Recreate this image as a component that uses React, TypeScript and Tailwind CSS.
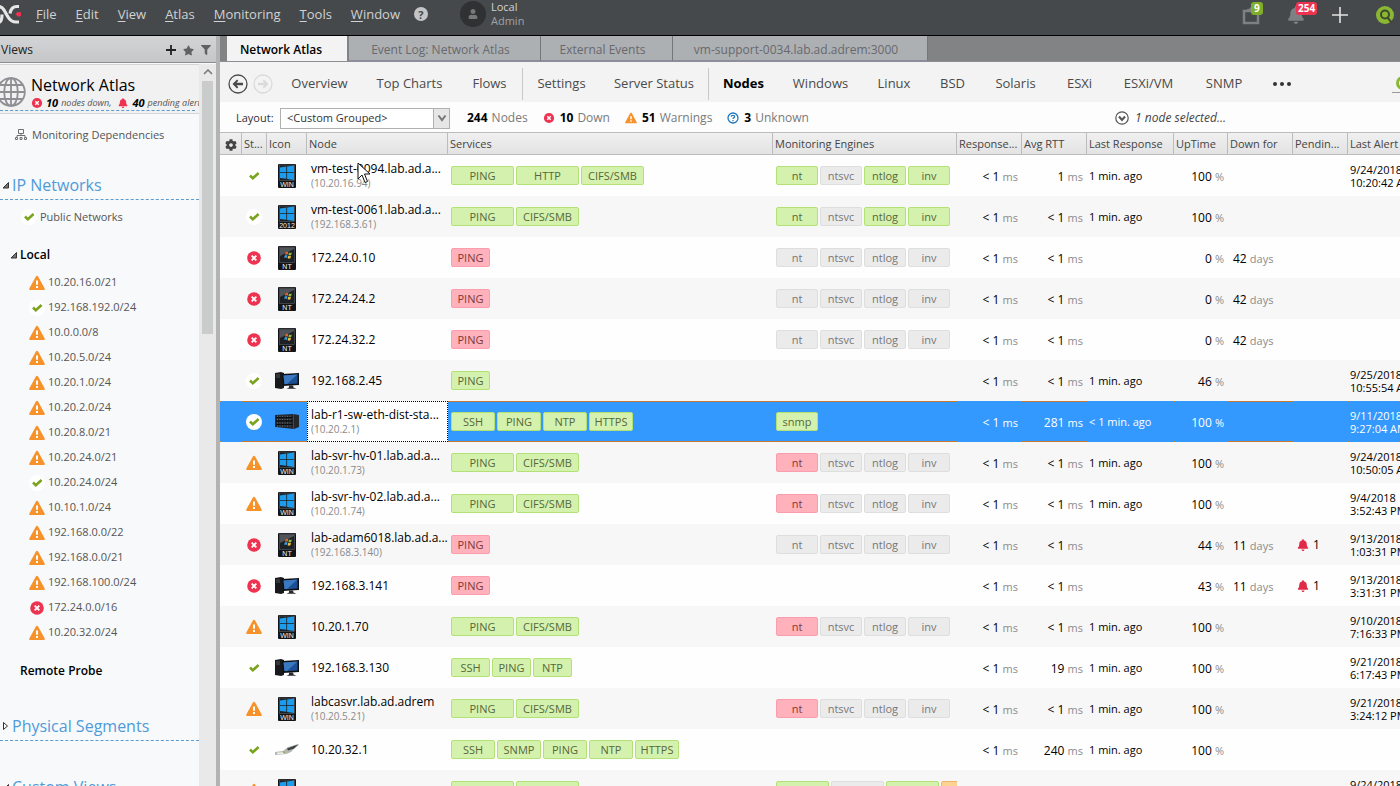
import { useState } from "react";
import type { ReactNode } from "react";
import { FaBell, FaFilter, FaStar, FaCog, FaUser } from "react-icons/fa";
import clsx from "clsx";

// ── Types and data ──────────────────────────────────────────────

type Status = "ok" | "down" | "warn";
type Device = "win" | "w2012" | "nt" | "pc" | "switch" | "cable";
type Tone = "green" | "red" | "gray" | "orange";

interface Tag {
  label: string;
  tone: Tone;
}

interface NodeRow {
  status: Status;
  device: Device;
  name: string;
  ip?: string;
  services: string[];
  engines?: Tag[];
  rtt: string;
  seen?: string;
  uptime: string;
  down?: string;
  pending?: string;
  alert?: [string, string];
}

const engines = (nt: Tone, rest: Tone): Tag[] => [
  { label: "nt", tone: nt },
  { label: "ntsvc", tone: "gray" },
  { label: "ntlog", tone: rest },
  { label: "inv", tone: rest },
];

const rows: NodeRow[] = [
  { status: "ok", device: "win", name: "vm-test-0094.lab.ad.a...", ip: "10.20.16.94", services: ["PING", "HTTP", "CIFS/SMB"], engines: engines("green", "green"), rtt: "1", seen: "1 min. ago", uptime: "100", alert: ["9/24/2018", "10:20:42 AM"] },
  { status: "ok", device: "w2012", name: "vm-test-0061.lab.ad.a...", ip: "192.168.3.61", services: ["PING", "CIFS/SMB"], engines: engines("green", "green"), rtt: "< 1", seen: "1 min. ago", uptime: "100" },
  { status: "down", device: "nt", name: "172.24.0.10", services: ["PING"], engines: engines("gray", "gray"), rtt: "< 1", uptime: "0", down: "42" },
  { status: "down", device: "nt", name: "172.24.24.2", services: ["PING"], engines: engines("gray", "gray"), rtt: "< 1", uptime: "0", down: "42" },
  { status: "down", device: "nt", name: "172.24.32.2", services: ["PING"], engines: engines("gray", "gray"), rtt: "< 1", uptime: "0", down: "42" },
  { status: "ok", device: "pc", name: "192.168.2.45", services: ["PING"], rtt: "< 1", seen: "1 min. ago", uptime: "46", alert: ["9/25/2018", "10:55:54 AM"] },
  { status: "ok", device: "switch", name: "lab-r1-sw-eth-dist-sta...", ip: "10.20.2.1", services: ["SSH", "PING", "NTP", "HTTPS"], engines: [{ label: "snmp", tone: "green" }], rtt: "281", seen: "< 1 min. ago", uptime: "100", alert: ["9/11/2018", "9:27:04 AM"] },
  { status: "warn", device: "win", name: "lab-svr-hv-01.lab.ad.a...", ip: "10.20.1.73", services: ["PING", "CIFS/SMB"], engines: engines("red", "gray"), rtt: "< 1", seen: "1 min. ago", uptime: "100", alert: ["9/24/2018", "10:50:05 AM"] },
  { status: "warn", device: "win", name: "lab-svr-hv-02.lab.ad.a...", ip: "10.20.1.74", services: ["PING", "CIFS/SMB"], engines: engines("red", "gray"), rtt: "< 1", seen: "1 min. ago", uptime: "100", alert: ["9/4/2018", "3:52:43 PM"] },
  { status: "down", device: "nt", name: "lab-adam6018.lab.ad.a...", ip: "192.168.3.140", services: ["PING"], engines: engines("gray", "gray"), rtt: "< 1", uptime: "44", down: "11", pending: "1", alert: ["9/13/2018", "1:03:31 PM"] },
  { status: "down", device: "pc", name: "192.168.3.141", services: ["PING"], rtt: "< 1", uptime: "43", down: "11", pending: "1", alert: ["9/13/2018", "3:31:31 PM"] },
  { status: "warn", device: "win", name: "10.20.1.70", services: ["PING", "CIFS/SMB"], engines: engines("red", "gray"), rtt: "< 1", seen: "1 min. ago", uptime: "100", alert: ["9/10/2018", "7:16:33 PM"] },
  { status: "ok", device: "pc", name: "192.168.3.130", services: ["SSH", "PING", "NTP"], rtt: "19", seen: "1 min. ago", uptime: "100", alert: ["9/21/2018", "6:17:43 PM"] },
  { status: "warn", device: "win", name: "labcasvr.lab.ad.adrem", ip: "10.20.5.21", services: ["PING", "CIFS/SMB"], engines: engines("red", "gray"), rtt: "< 1", seen: "1 min. ago", uptime: "100", alert: ["9/21/2018", "3:24:12 PM"] },
  { status: "ok", device: "cable", name: "10.20.32.1", services: ["SSH", "SNMP", "PING", "NTP", "HTTPS"], rtt: "240", seen: "1 min. ago", uptime: "100" },
  { status: "warn", device: "win", name: "10.20.1.71", services: ["PING", "CIFS/SMB"], engines: [{ label: "nt", tone: "green" }, { label: "ntsvc", tone: "gray" }, { label: "ntlog", tone: "green" }, { label: "inv", tone: "orange" }], rtt: "< 1", seen: "1 min. ago", uptime: "100", alert: ["9/24/2018", "10:12:08 AM"] },
];

const columns = [
  { label: "St...", width: "w-[25px]" },
  { label: "Icon", width: "w-10" },
  { label: "Node", width: "w-[141px]" },
  { label: "Services", width: "" },
  { label: "Monitoring Engines", width: "w-[184px]" },
  { label: "Response...", width: "w-[65px]" },
  { label: "Avg RTT", width: "w-[65px]" },
  { label: "Last Response", width: "w-[87px]" },
  { label: "UpTime", width: "w-[54px]" },
  { label: "Down for", width: "w-[65px]" },
  { label: "Pendin...", width: "w-[55px]" },
  { label: "Last Alert", width: "w-[92px]" },
];

const subnets: { status: Status; label: string }[] = [
  { status: "warn", label: "10.20.16.0/21" },
  { status: "ok", label: "192.168.192.0/24" },
  { status: "warn", label: "10.0.0.0/8" },
  { status: "warn", label: "10.20.5.0/24" },
  { status: "warn", label: "10.20.1.0/24" },
  { status: "warn", label: "10.20.2.0/24" },
  { status: "warn", label: "10.20.8.0/21" },
  { status: "warn", label: "10.20.24.0/21" },
  { status: "ok", label: "10.20.24.0/24" },
  { status: "warn", label: "10.10.1.0/24" },
  { status: "warn", label: "192.168.0.0/22" },
  { status: "warn", label: "192.168.0.0/21" },
  { status: "warn", label: "192.168.100.0/24" },
  { status: "down", label: "172.24.0.0/16" },
  { status: "warn", label: "10.20.32.0/24" },
];

const menus = ["File", "Edit", "View", "Atlas", "Monitoring", "Tools", "Window"];

const sections = [
  { label: "Overview", width: "w-[85px]" },
  { label: "Top Charts", width: "w-[95px]" },
  { label: "Flows", width: "w-[66px]", divider: true },
  { label: "Settings", width: "w-[77px]" },
  { label: "Server Status", width: "w-[109px]", divider: true },
  { label: "Nodes", width: "w-[69px]" },
  { label: "Windows", width: "w-[85px]" },
  { label: "Linux", width: "w-[62px]" },
  { label: "BSD", width: "w-[55px]" },
  { label: "Solaris", width: "w-[71px]" },
  { label: "ESXi", width: "w-[57px]" },
  { label: "ESXi/VM", width: "w-[81px]" },
  { label: "SNMP", width: "w-[70px]" },
];

// ── Icons ───────────────────────────────────────────────────────

function StatusIcon({ status, small }: { status: Status; small?: boolean }) {
  const size = small ? "size-3 shrink-0" : "size-4 shrink-0";
  if (status === "ok") {
    return (
      <svg viewBox="0 0 16 16" className={size}>
        <circle cx="8" cy="8" r="8" fill="#fff" />
        <path d="M4 7.500l2.800 2.800L12.600 5" fill="none" stroke="#7aa41e" strokeWidth="2.600" />
      </svg>
    );
  }
  if (status === "down") {
    return (
      <svg viewBox="0 0 16 16" className={size}>
        <circle cx="8" cy="8" r="6.800" fill="#ee3350" />
        <path d="M5.700 5.700l4.600 4.600M10.300 5.700l-4.600 4.600" stroke="#fff" strokeWidth="1.900" />
      </svg>
    );
  }
  return (
    <svg viewBox="0 0 16 16" className={size}>
      <path d="M8 .8q.7 0 1.100.8l6.600 12q.5 1.400-.9 1.400H1.200Q-.2 15 .3 13.600L6.900 1.600Q7.300.8 8 .8z" fill="#f7922a" />
      <path d="M7 5.500h2v4.200H7zM7 11h2v2H7z" fill="#fff" />
    </svg>
  );
}

function WindowsBox({ label, classic }: { label: string; classic?: boolean }) {
  return (
    <svg viewBox="0 0 18 24" className="h-6 w-[18px]">
      <rect width="18" height="24" rx="1" fill="#121417" />
      <rect x="1.500" y="1" width="15" height="15.500" fill="#1d2024" stroke="#5a5f64" strokeWidth=".6" />
      {classic ? (
        <>
          <path d="M2 10L16 3v-1.500H2z" fill="#666b70" opacity=".7" />
          <path d="M7.500 6.500q1.500-1.200 2.800-.3l-.6 2.500q-1.400-.8-2.800.2z" fill="#e8642c" />
          <path d="M11 6.500q1.400.8 2.800 0l-.6 2.500q-1.500.9-2.800 0z" fill="#8fbf3c" />
          <path d="M6.700 9.600q1.400-1 2.800-.2l-.6 2.500q-1.400-.8-2.700.2z" fill="#3f9be0" />
          <path d="M10.200 9.800q1.400.9 2.800 0l-.6 2.500q-1.400.9-2.800 0z" fill="#f3c13a" />
        </>
      ) : (
        <path d="M2 3.500l6.300-.9v5.700H2zM9.100 2.500l6.900-1v6.800H9.100zM2 9.100h6.300v5.700L2 13.900zM9.100 9.100H16v6.800l-6.900-1z" fill="#1b9cee" />
      )}
      <text x="9" y="23" textAnchor="middle" fontSize="7" fontFamily="Liberation Sans, sans-serif" fill="#f0f0f0">
        {label}
      </text>
    </svg>
  );
}

function DeviceIcon({ device }: { device: Device }) {
  if (device === "win") return <WindowsBox label="WIN" />;
  if (device === "w2012") return <WindowsBox label="2012" />;
  if (device === "nt") return <WindowsBox label="NT" classic />;
  if (device === "pc") {
    return (
      <svg viewBox="0 0 24 18" className="h-[18px] w-6">
        <path d="M0 1l6-1 3 1v15l-3 1-6-1z" fill="#17191c" />
        <path d="M1 3h4M1 5h4" stroke="#5f656b" strokeWidth=".8" />
        <path d="M7 2l17-1v12l-16 1z" fill="#0e1114" />
        <path d="M8.500 3.500l14-.9v8.800L9.500 12.300z" fill="#1c4f93" />
        <path d="M8.500 3.500l14-.9L12 12.100H9.500z" fill="#3a78c0" />
        <path d="M14 13.500h4l.5 2 3 1.200H11.500l2.500-1.200z" fill="#26292d" />
      </svg>
    );
  }
  if (device === "switch") {
    return (
      <svg viewBox="0 0 24 15" className="h-[15px] w-6">
        <path d="M0 1l18-1 6 1v12l-5 2-19-2z" fill="#23272b" />
        <path d="M1 3.500h17M1 7h17M1 10.500h17" stroke="#0b0d0f" strokeWidth="1" />
        <path d="M2 2.300h15M2 5.500h15M2 9h15M2 12h15" stroke="#6c747b" strokeWidth="1" strokeDasharray="1 1.500" />
        <path d="M18.500 0v15" stroke="#4b5258" strokeWidth=".8" />
      </svg>
    );
  }
  return (
    <svg viewBox="0 0 24 12" className="h-3 w-6">
      <path d="M0 8l8-1 5-4 10-3 1 1-5 4-3 3-5 2-11 1z" fill="#b4b6b5" />
      <path d="M12 4.500l11-4-4 4-6 2z" fill="#3c3f41" />
      <path d="M2 8.500l8-.5-2 2-6 .3z" fill="#e8e8e6" />
      <path d="M8 7.500h2v1.500H8z" fill="#8dbf3a" />
    </svg>
  );
}

function Logo() {
  return (
    <svg viewBox="0 0 22 20" className="h-5 w-[22px]">
      <g fill="none" stroke="#e6e6e6" strokeWidth="3.200">
        <path d="M-3 3q4-1.500 7 3l4 7q3 5 8 5h3" />
        <path d="M19 2.500h-2q-6 0-7 7" />
        <path d="M-1 18.500q3-1 3-8" />
      </g>
      <path d="M15.500 10l2-2H20q1 0 1 1v2.500q0 1-1 1h-2.500z" fill="#ee3350" />
    </svg>
  );
}

function Globe() {
  return (
    <svg viewBox="4 0 26 30" className="h-[30px] w-[26px] shrink-0">
      <g fill="none" stroke="#8f8f93" strokeWidth="1.800">
        <circle cx="15" cy="15" r="13.800" />
        <ellipse cx="15" cy="15" rx="6.800" ry="13.800" />
        <path d="M15 1v28M1 15h28M3.500 8h23M3.500 22h23" />
      </g>
    </svg>
  );
}

function Twisty({ open }: { open?: boolean }) {
  return (
    <svg viewBox="0 0 8 10" className="h-[10px] w-2 shrink-0">
      {open ? (
        <path d="M6.500 2.500v5.500H1z" fill="#777" stroke="#333" />
      ) : (
        <path d="M1.500 1.500v7l4-3.500z" fill="#fff" stroke="#333" />
      )}
    </svg>
  );
}

function TopologyIcon() {
  return (
    <svg viewBox="0 0 12 12" className="size-3 shrink-0">
      <g fill="none" stroke="#6f6f6f">
        <path d="M3.500.5h5v4h-5zM6 4.500v2M2 8V6.500h8V8" />
        <path d="M.5 8.500h2v2h-2zM5 8.500h2v2H5zM9.500 8.500h2v2h-2z" />
      </g>
    </svg>
  );
}

function RoundArrow({ back }: { back?: boolean }) {
  const color = back ? "#4a4a4a" : "#dadada";
  return (
    <svg viewBox="0 0 20 20" className="size-5">
      <circle cx="10" cy="10" r="9" fill="none" stroke={color} strokeWidth="1.300" />
      <path
        d={back ? "M4.500 10L9 5.500l1.300 1.300L8.500 8.800H15v2.400H8.500l1.800 2L9 14.500z" : "M15.500 10L11 5.500 9.700 6.800l1.800 2H5v2.400h6.500l-1.800 2 1.300 1.300z"}
        fill={color}
      />
    </svg>
  );
}

function FinderMark() {
  return (
    <svg viewBox="0 0 18 18" className="size-[18px] shrink-0">
      <circle cx="9" cy="9" r="9" fill="#8ab833" />
      <circle cx="9" cy="8.500" r="4" fill="none" stroke="#3f4a2c" strokeWidth="2" />
      <path d="M11.500 11.500L16 17" stroke="#3f4a2c" strokeWidth="2" />
    </svg>
  );
}

// ── Small pieces ────────────────────────────────────────────────

const tones: Record<Tone, string> = {
  green: "border-[#b2e275] bg-[#d5f1ae] text-[#56683a]",
  red: "border-[#fb9dac] bg-[#ffb1bc] text-[#7c3a36]",
  gray: "border-[#dedede] bg-[#ebebeb] text-[#777]",
  orange: "border-[#eeb568] bg-[#fdd394] text-[#7a5a2a]",
};

function TagBox({ label, tone, width }: Tag & { width: string }) {
  return (
    <span className={clsx("flex h-[19px] shrink-0 items-center justify-center rounded-[2px] border pb-px text-[11px] leading-none", tones[tone], width)}>
      {label}
    </span>
  );
}

function serviceWidth(services: string[]) {
  if (services.includes("CIFS/SMB")) return "w-[63px]";
  return services.includes("HTTPS") ? "w-11" : "w-[39px]";
}

function Measure({ value, unit, selected }: { value: string; unit: string; selected?: boolean }) {
  return (
    <>
      {value} <span className={clsx("text-[11px]", selected ? "text-white" : "text-[#8c8c8c]")}>{unit}</span>
    </>
  );
}

function SectionTitle({ label, open }: { label: string; open?: boolean }) {
  return (
    <button className="flex h-[29px] w-full items-center gap-[2px] border-b border-dashed border-[#5b9bd0] pl-[2px] text-left text-[16px] text-[#4f9bd9]">
      <Twisty open={open} />
      {label}
    </button>
  );
}

// ── Page parts ──────────────────────────────────────────────────

function TopBar() {
  return (
    <header className="flex h-9 shrink-0 items-start border-b border-black bg-[#46494b] text-[#d0d2d3]">
      <div className="flex h-7 w-full items-center pr-[6px]">
        <Logo />
        <nav className="ml-[14px] flex gap-[19px] pt-[2px] text-[13px]">
          {menus.map((menu) => (
            <button key={menu}>
              <span className="underline underline-offset-2">{menu[0]}</span>
              {menu.slice(1)}
            </button>
          ))}
        </nav>
        <button aria-label="Help" className="ml-[14px] flex size-[14px] items-center justify-center rounded-full bg-[#c3c5c6] text-[11px] leading-none font-bold text-[#46494b]">
          ?
        </button>
        <div className="ml-8 flex items-center gap-[5px]">
          <span className="flex size-[26px] items-center justify-center rounded-full bg-[#2f3132] text-[#77797a]">
            <FaUser size={10} />
          </span>
          <div className="text-[11px] leading-[14px]">
            <div>Local</div>
            <div className="text-[#a0a2a3]">Admin</div>
          </div>
        </div>
        <div className="ml-auto flex items-center pt-[2px]">
          <button aria-label="Tasks" className="relative mr-[27px] h-5 w-[18px]">
            <svg viewBox="0 0 18 20" className="h-5 w-[18px]">
              <path d="M2 6h14v12H2z" fill="none" stroke="#7e8182" strokeWidth="2.500" />
              <path d="M5 7V4h2q1-3 4-1v4z" fill="#7e8182" />
            </svg>
            <span className="absolute -top-[3px] left-[9px] rounded-[3px] bg-[#7fae2b] px-[3px] text-[10px] leading-[13px] font-bold text-white">9</span>
          </button>
          <button aria-label="Alerts" className="relative mr-[27px] h-5 w-[18px] text-[#7e8182]">
            <FaBell size={18} />
            <span className="absolute -top-[3px] left-[9px] rounded-[3px] bg-[#ee3350] px-[2px] text-[10px] leading-[13px] font-bold text-white">254</span>
          </button>
          <button aria-label="Add" className="mr-7">
            <svg viewBox="0 0 16 16" className="size-4">
              <path d="M8 0v16M0 8h16" stroke="#e2e3e4" strokeWidth="1.600" />
            </svg>
          </button>
          <button aria-label="Search">
            <FinderMark />
          </button>
        </div>
      </div>
    </header>
  );
}

function Sidebar() {
  return (
    <aside className="flex w-[220px] shrink-0 flex-col border-r-4 border-[#b3b3b3] bg-[#f8f9fb]">
      <div className="flex h-[27px] shrink-0 items-center border-b border-[#8d8d8d] bg-linear-to-b from-[#d3d4d5] to-[#c6c6c7] pt-[2px] pr-[5px] pl-px text-[#333]">
        <h2 className="text-[12px] text-[#222]">Views</h2>
        <div className="ml-auto flex items-center gap-[7px] text-[#5f6163]">
          <button aria-label="Add view">
            <svg viewBox="0 0 10 10" className="size-[10px]">
              <path d="M5 0v10M0 5h10" stroke="#222" strokeWidth="1.800" />
            </svg>
          </button>
          <button aria-label="Favorites"><FaStar size={11} /></button>
          <button aria-label="Filter"><FaFilter size={10} /></button>
        </div>
      </div>
      <div className="flex min-h-0 flex-1 pt-px">
        <div className="min-w-0 flex-1 overflow-hidden">
          <div className="h-[50px] border-t border-b border-[#d5d5d5] bg-[#f1f1f2] pr-1">
            <div className="flex h-[46px] items-center gap-[5px] border-b border-dashed border-[#5b9bd0] pt-2">
              <Globe />
              <div className="whitespace-nowrap">
                <h1 className="text-[16px] leading-[22px] text-black">Network Atlas</h1>
                <div className="flex items-center text-[9px] leading-[14px] text-[#555] italic">
                  <StatusIcon status="down" small />
                  <b className="mx-[3px] text-[11px] text-black">10</b>nodes down,
                  <FaBell size={10} className="mr-1 ml-[7px] shrink-0 text-[#ee3350]" />
                  <b className="mr-[3px] text-[11px] text-black">40</b>pending alerts
                </div>
              </div>
            </div>
          </div>
          <a href="#dependencies" className="mt-[10px] flex h-[22px] items-center gap-[5px] pl-[15px] text-[11px] text-[#555]">
            <TopologyIcon />
            Monitoring Dependencies
          </a>
          <div className="mt-[25px]">
            <SectionTitle label="IP Networks" open />
          </div>
          <a href="#public" className="mt-1 flex h-[26px] items-center gap-[3px] pl-[21px] text-[11px] text-[#555]">
            <StatusIcon status="ok" />
            Public Networks
          </a>
          <button className="mt-3 flex h-[26px] items-center gap-[2px] pl-[10px] text-[12px] font-semibold text-black">
            <Twisty open />
            Local
          </button>
          <ul className="mt-[2px]">
            {subnets.map((net) => (
              <li key={net.label}>
                <a href="#subnet" className="flex h-[25px] items-center gap-[3px] pl-[29px] text-[11px] text-[#555]">
                  <StatusIcon status={net.status} />
                  {net.label}
                </a>
              </li>
            ))}
          </ul>
          <button className="mt-[13px] flex h-[26px] items-center pl-5 text-[12px] font-semibold text-black">Remote Probe</button>
          <div className="mt-7">
            <SectionTitle label="Physical Segments" />
          </div>
          <div className="mt-8">
            <SectionTitle label="Custom Views" open />
          </div>
        </div>
        <div className="flex w-[17px] shrink-0 flex-col items-center bg-[#e9e9e9]">
          <svg viewBox="0 0 10 6" className="mt-[5px] mb-[6px] h-[6px] w-[10px]">
            <path d="M1 5l4-4 4 4" fill="none" stroke="#777" strokeWidth="1.500" />
          </svg>
          <div className="h-[35%] w-[11px] bg-[#cacccc]" />
        </div>
      </div>
    </aside>
  );
}

function Tabs() {
  const tab = "flex h-full items-center justify-center border-r border-[#74767a] border-b border-b-[#8c8ca0] bg-[#adb0b2] pt-[3px] text-[12px] text-[#68686e]";
  return (
    <div className="flex h-[26px] shrink-0 items-center border-b border-[#8e8e94] bg-[#818385] pl-[7px]">
      <button className="mr-[2px] flex h-full w-[120px] items-center justify-center bg-[#f3f3f3] pt-[2px] pr-3 text-[12px] font-semibold text-black">Network Atlas</button>
      <button className={clsx(tab, "w-[192px] pr-2")}>Event Log: Network Atlas</button>
      <button className={clsx(tab, "w-[132px] pr-2")}>External Events</button>
      <button className={clsx(tab, "w-[255px] pr-2")}>vm-support-0034.lab.ad.adrem:3000</button>
    </div>
  );
}

function SectionNav() {
  const [active, setActive] = useState("Nodes");
  return (
    <nav className="flex h-10 shrink-0 items-center bg-[#f3f3f3] pt-[3px] pl-2 text-[13px] text-[#4a4a4a]">
      <button aria-label="Back"><RoundArrow back /></button>
      <button aria-label="Forward" className="mr-1 ml-[5px]"><RoundArrow /></button>
      {sections.map((item) => (
        <button
          key={item.label}
          onClick={() => setActive(item.label)}
          className={clsx("h-8 shrink-0 whitespace-nowrap", item.width, item.divider && "border-r border-[#c8c8c8]", active === item.label && "font-bold text-black")}
        >
          {item.label}
        </button>
      ))}
      <button aria-label="More" className="flex w-[45px] shrink-0 justify-center">
        <svg viewBox="0 0 18 4" className="h-1 w-[18px]">
          <circle cx="2" cy="2" r="2" fill="#333" />
          <circle cx="9" cy="2" r="2" fill="#333" />
          <circle cx="16" cy="2" r="2" fill="#333" />
        </svg>
      </button>
      <button aria-label="Find" className="-mr-3 ml-auto border-b border-[#999] pl-[2px]">
        <svg viewBox="0 0 18 18" className="size-[18px]">
          <circle cx="9" cy="9" r="7" fill="#8ab833" />
          <circle cx="9" cy="9" r="3" fill="none" stroke="#fff" strokeWidth="1.800" />
        </svg>
      </button>
    </nav>
  );
}

function Stat({ icon, value, label }: { icon?: ReactNode; value: string; label: string }) {
  return (
    <div className="flex items-center text-[#7a7a7a]">
      {icon}
      <b className={clsx("mr-1 text-black", icon && "ml-[5px]")}>{value}</b>
      {label}
    </div>
  );
}

function Toolbar() {
  return (
    <div className="flex h-[30px] shrink-0 items-center bg-[#fdfdfd] pt-[2px] pl-4 text-[12px] whitespace-nowrap">
      <label htmlFor="layout" className="w-11 text-[11px] text-[#333]">Layout:</label>
      <div className="flex h-[21px] w-[170px] border border-[#b0b0b0] bg-white">
        <select id="layout" className="min-w-0 flex-1 appearance-none bg-white pl-[6px] text-[11px] text-[#333]">
          <option>&lt;Custom Grouped&gt;</option>
        </select>
        <span className="flex w-4 items-center justify-center border-l border-[#b0b0b0] bg-[#e6e6e6]">
          <svg viewBox="0 0 10 8" className="h-2 w-[10px]">
            <path d="M1.500 1.500L5 6l3.500-4.500" fill="none" stroke="#777" strokeWidth="2" />
          </svg>
        </span>
      </div>
      <div className="ml-[17px] flex gap-[15px]">
        <Stat value="244" label="Nodes" />
        <Stat icon={<StatusIcon status="down" small />} value="10" label="Down" />
        <Stat icon={<StatusIcon status="warn" small />} value="51" label="Warnings" />
        <Stat
          icon={
            <svg viewBox="0 0 12 12" className="size-3">
              <circle cx="6" cy="6" r="5" fill="#fff" stroke="#1f77bd" strokeWidth="1.300" />
              <path d="M4.300 4.800q0-1.500 1.700-1.500t1.700 1.400q0 .8-1 1.200-.7.300-.7 1.100M6 8v1.200" fill="none" stroke="#1f77bd" strokeWidth="1.200" />
            </svg>
          }
          value="3"
          label="Unknown"
        />
      </div>
      <button className="mr-[174px] ml-auto flex items-center gap-[6px] text-[#444] italic">
        <svg viewBox="0 0 14 14" className="size-[14px]">
          <circle cx="7" cy="7" r="6.200" fill="#fff" stroke="#555" strokeWidth="1.200" />
          <path d="M4 5.500l3 3.500 3-3.500" fill="none" stroke="#555" strokeWidth="2" />
        </svg>
        1 node selected...
      </button>
    </div>
  );
}

function NodeTableRow({ row, selected, onSelect }: { row: NodeRow; selected: boolean; onSelect: () => void }) {
  const cell = clsx("h-[41px] overflow-hidden p-0 whitespace-nowrap", selected && "border-y border-dotted border-[#c77a30]");
  const figure = clsx(cell, "pt-[2px]");
  const wide = row.engines?.some((engine) => engine.tone === "orange");
  const down = row.status === "down";
  return (
    <tr onClick={onSelect} className={selected ? "bg-[#3399fe] text-white" : "bg-[#fefefe] text-black even:bg-[#f7f7f7]"}>
      <td className={cell} />
      <td className={clsx(cell, "pr-[2px]")}>
        <div className="flex justify-center"><StatusIcon status={row.status} /></div>
      </td>
      <td className={cell}>
        <div className="flex justify-center"><DeviceIcon device={row.device} /></div>
      </td>
      <td className={clsx("h-[41px] overflow-hidden p-0 whitespace-nowrap text-black", selected ? "border border-dotted border-black bg-white pl-[3px]" : "pl-1")}>
        <div className="text-[12px] leading-[15px]">{row.name}</div>
        {row.ip && <div className="text-[10px] leading-[15px] text-[#8a8a8a]">({row.ip})</div>}
      </td>
      <td className={clsx(cell, "pl-[3px]")}>
        <div className="flex gap-[2px]">
          {row.services.map((service) => (
            <TagBox key={service} label={service} tone={down ? "red" : "green"} width={serviceWidth(row.services)} />
          ))}
        </div>
      </td>
      <td className={clsx(cell, "pl-[3px]")}>
        <div className="flex gap-[2px] overflow-hidden">
          {row.engines?.map((engine) => (
            <TagBox key={engine.label} {...engine} width={wide ? "w-[53px]" : "w-[42px]"} />
          ))}
        </div>
      </td>
      <td className={clsx(figure, "pr-1 text-right")}><Measure value="< 1" unit="ms" selected={selected} /></td>
      <td className={clsx(figure, "pr-1 text-right")}><Measure value={row.rtt} unit="ms" selected={selected} /></td>
      <td className={clsx(figure, "pl-[2px] text-[11px]")}>{row.seen}</td>
      <td className={clsx(figure, "pr-1 text-right")}><Measure value={row.uptime} unit="%" selected={selected} /></td>
      <td className={clsx(figure, "pl-[5px]")}>{row.down && <Measure value={row.down} unit="days" />}</td>
      <td className={cell}>
        {row.pending && (
          <div className="flex items-center gap-1 pl-1">
            <FaBell size={12} className="text-[#e02a48]" />
            {row.pending}
          </div>
        )}
      </td>
      <td className={clsx(cell, "pl-[2px] text-[11px] leading-[13px]")}>
        {row.alert?.map((part) => <div key={part}>{part}</div>)}
      </td>
    </tr>
  );
}

function NodeTable() {
  const [selected, setSelected] = useState(6);
  const head = "h-[23px] overflow-hidden border-y border-r border-[#bcbcbc] bg-linear-to-b from-[#f0f0f0] to-[#e3e3e3] p-0 pt-[2px] pl-[2px] text-left font-normal whitespace-nowrap text-[#444]";
  return (
    <div className="relative min-h-0 flex-1 overflow-hidden bg-[#fefefe]">
      <table className="w-full min-w-[1220px] table-fixed border-separate border-spacing-0 text-[12px]">
        <thead className="text-[11px]">
          <tr>
            <th className={clsx(head, "w-[22px]")}>
              <button aria-label="Columns" className="flex w-full justify-center pr-[2px] text-[#444]"><FaCog size={12} /></button>
            </th>
            {columns.map((column) => (
              <th key={column.label} className={clsx(head, column.width)}>{column.label}</th>
            ))}
          </tr>
        </thead>
        <tbody>
          {rows.map((row, i) => (
            <NodeTableRow key={row.name} row={row} selected={i === selected} onSelect={() => setSelected(i)} />
          ))}
        </tbody>
      </table>
      {/* pointer */}
      <svg viewBox="0 0 14 22" className="pointer-events-none absolute top-[30px] left-[137px] h-[22px] w-[14px]">
        <path d="M1 1v16l4-4 3 7.500 2.500-1L7.500 12H13z" fill="#fff" stroke="#111" />
      </svg>
    </div>
  );
}

// ── App ─────────────────────────────────────────────────────────

export default function App() {
  return (
    <div className="flex h-screen flex-col overflow-hidden bg-white font-['Open_Sans','Noto_Sans',sans-serif]">
      <TopBar />
      <div className="flex min-h-0 flex-1">
        <Sidebar />
        <main className="flex min-w-0 flex-1 flex-col overflow-hidden">
          <Tabs />
          <SectionNav />
          <Toolbar />
          <NodeTable />
        </main>
      </div>
    </div>
  );
}
